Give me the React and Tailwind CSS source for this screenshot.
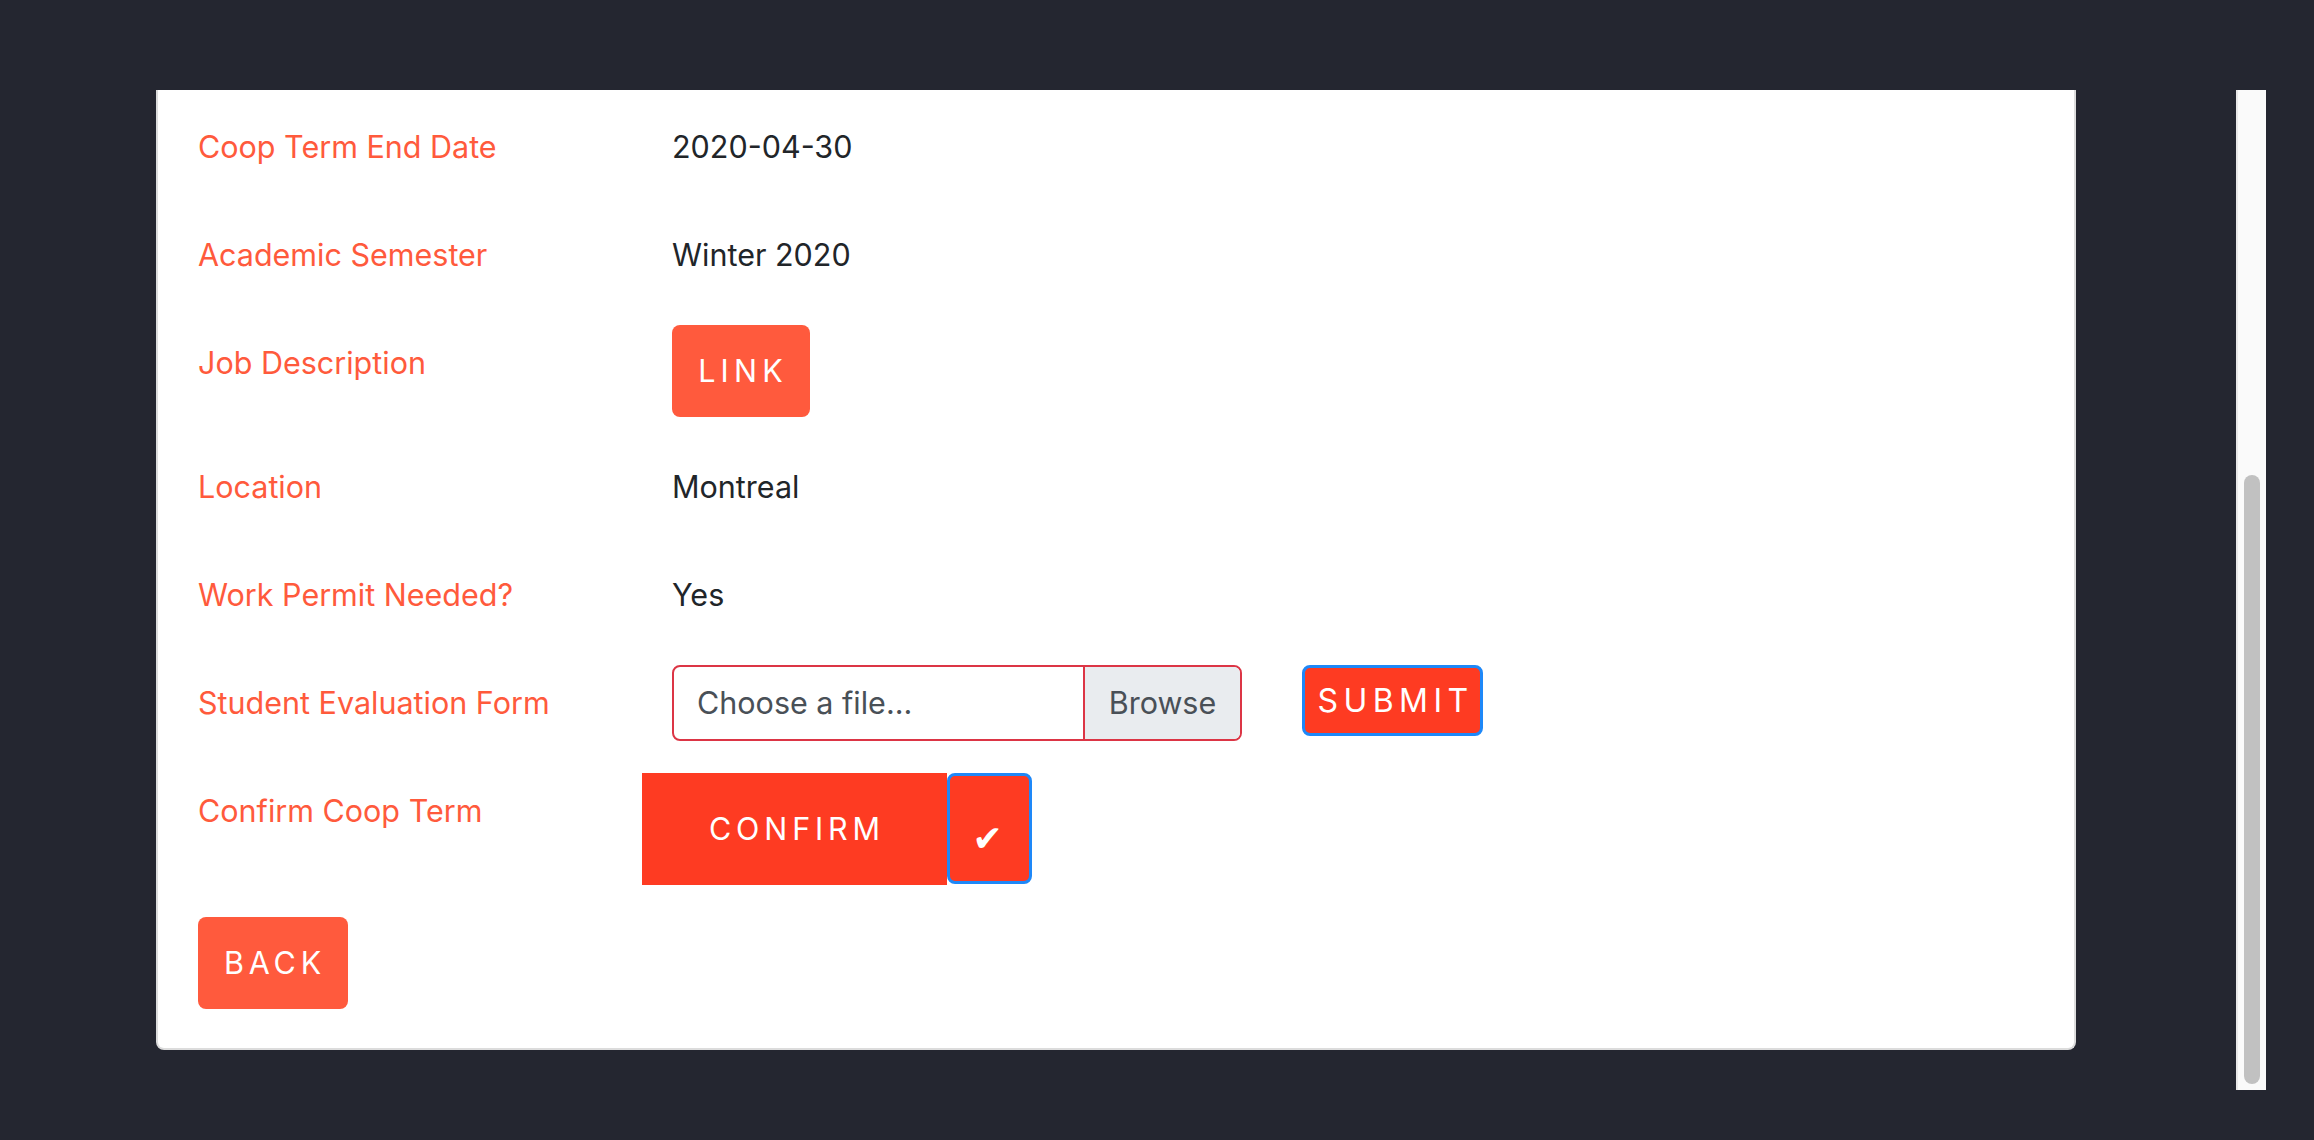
import React from 'react'

const FONT = { fontFamily: 'Inter, "Liberation Sans", sans-serif' }

const ROWS = [
  { label: 'Coop Term End Date', value: '2020-04-30' },
  { label: 'Academic Semester', value: 'Winter 2020' },
  { label: 'Job Description', link: true },
  { label: 'Location', value: 'Montreal' },
  { label: 'Work Permit Needed?', value: 'Yes' },
]

function Label({ children }) {
  return (
    <div className="w-[474px] shrink-0 pt-[14px] leading-[48px] text-[#ff5a3c]">{children}</div>
  )
}

function Scrollbar() {
  return (
    <div className="w-[30px] shrink-0 h-full bg-[#fafafa] border-l-2 border-[#e8e8e8] flex flex-col pt-[385px] pb-[6px] pl-[6px]">
      <div className="w-[16px] flex-1 rounded-full bg-[#c1c1c1]" />
    </div>
  )
}

export default function App() {
  return (
    <div className="w-full h-[1140px] bg-[#242630] pt-[90px] pr-[48px] flex flex-col" style={FONT}>
      <div className="flex h-[1000px]">
        <div className="flex-1 pl-[156px]">
          <div className="w-[1920px] bg-white border-x-2 border-b-2 border-[#dcdcdc] rounded-b-[8px] pt-[19px] pb-[39px] px-[40px] text-[30.5px] text-[#212529] flex flex-col gap-[32px]">
            {ROWS.map(r => (
              <div key={r.label} className="flex items-start">
                <Label>{r.label}</Label>
                {r.link ? (
                  <button className="h-[92px] w-[138px] rounded-[8px] bg-[#ff5a3d] text-white tracking-[0.17em] pl-[4px] leading-[48px]">
                    LINK
                  </button>
                ) : (
                  <div className="py-[14px] leading-[48px]">{r.value}</div>
                )}
              </div>
            ))}

            {/* Evaluation upload */}
            <div className="flex items-start">
              <Label>Student Evaluation Form</Label>
              <div className="flex items-start">
                <div className="w-[570px] h-[76px] flex rounded-[8px] border-2 border-[#dc3545] overflow-hidden text-[#495057]">
                  <div className="flex-1 flex items-center pl-[23px]">Choose a file...</div>
                  <div className="w-[157px] flex items-center justify-center bg-[#e9ecef] border-l-2 border-[#dc3545]">Browse</div>
                </div>
                <button className="ml-[60px] h-[71px] w-[181px] rounded-[8px] bg-[#fe3b22] border-[3px] border-[#1e88f8] text-white text-[32px] tracking-[0.17em] pl-[6px]">
                  SUBMIT
                </button>
              </div>
            </div>

            {/* Confirm */}
            <div className="flex items-start">
              <Label>Confirm Coop Term</Label>
              <div className="flex -ml-[30px]">
                <button className="h-[112px] w-[305px] bg-[#fe3b22] text-white tracking-[0.16em] pl-[5px]">CONFIRM</button>
                <button className="h-[111px] w-[85px] rounded-[8px] bg-[#fe3b22] border-[3px] border-[#1e88f8] text-white flex items-center justify-center pt-[20px] pr-[4px]">
                  <span className="text-[36px] leading-none" style={{ fontFamily: '"DejaVu Sans", sans-serif' }}>✔</span>
                </button>
              </div>
            </div>

            <div>
              <button className="h-[92px] w-[150px] rounded-[8px] bg-[#ff5a3d] text-white tracking-[0.16em] pl-[4px]">BACK</button>
            </div>
          </div>
        </div>
        <Scrollbar />
      </div>
    </div>
  )
}
